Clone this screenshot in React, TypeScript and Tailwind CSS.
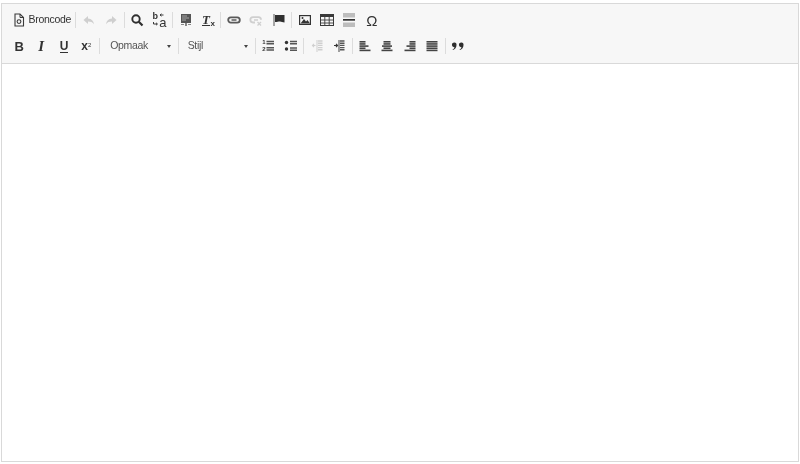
import React from "react";

const C = "#3a3a3a";
const D = "#cfcfcf";

function Btn({ children }: { children: React.ReactNode }) {
  return <div className="flex h-[22px] w-[22.4px] shrink-0 items-center justify-center">{children}</div>;
}
function Sep() {
  return (
    <div className="flex h-[22px] w-[3.6px] shrink-0 items-center justify-center">
      <div className="h-[16px] w-px bg-[#dcdcdc]" />
    </div>
  );
}
function Ic({ children }: { children: React.ReactNode }) {
  return (
    <svg width="14" height="14" viewBox="0 0 14 14" className="block">
      {children}
    </svg>
  );
}
function Lines({ rows, color = "#444" }: { rows: [number, number][]; color?: string }) {
  return (
    <Ic>
      {rows.map(([x, w], i) => (
        <rect key={i} x={x} y={2 + i * 2.15} width={w} height="1.6" fill={color} />
      ))}
    </Ic>
  );
}
function Select({ label, width, pad }: { label: string; width: string; pad: string }) {
  return (
    <div className={`flex h-[22px] shrink-0 items-center justify-between pr-[6px] text-[10.5px] tracking-[-0.3px] text-[#555] ${pad} ${width}`}>
      <span>{label}</span>
      <span className="h-0 w-0 border-x-[2.5px] border-t-[3px] border-x-transparent border-t-[#444]" />
    </div>
  );
}

export default function App() {
  return (
    <div className="h-[464px] w-[800px] bg-white pl-px pr-px pt-[3px] font-['Liberation_Sans',Arial,sans-serif]">
      <div className="flex h-[459px] flex-col border border-[#d9d9d9] bg-white">
        <div className="flex h-[60px] shrink-0 flex-col gap-[4px] border-b border-[#d9d9d9] bg-[#f7f7f7] pl-[6px] pt-[5px]">
          <div className="flex items-center blur-[0.3px]">
            <div className="flex h-[22px] w-[66px] shrink-0 items-center pl-[5px] text-[10.5px] tracking-[-0.3px] text-[#333]">
              <svg width="12" height="14" viewBox="0 0 12 14" className="mr-[3.500px] shrink-0">
                <path d="M2 1h5l3.5 3.5V13H2z" fill="none" stroke={C} strokeWidth="1.1" />
                <path d="M7 1v3.5h3.5" fill="none" stroke={C} strokeWidth="1" />
                <circle cx="6" cy="8.6" r="1.9" fill="none" stroke={C} strokeWidth="1.1" />
              </svg>
              <span>Broncode</span>
            </div>
            <Sep />
            <Btn>
              <Ic><path d="M6 3 1.5 7 6 11V8.6c2.8 0 4.6.7 6 2.6-.4-3.300-2.400-5.400-6-5.800z" fill={D} /></Ic>
            </Btn>
            <Btn>
              <Ic><path d="M8 3l4.500 4L8 11V8.600c-2.800 0-4.600.7-6 2.600.4-3.300 2.400-5.400 6-5.800z" fill={D} /></Ic>
            </Btn>
            <Sep />
            <Btn>
              <Ic>
                <circle cx="6" cy="6" r="3.7" fill="none" stroke="#2f2f2f" strokeWidth="1.9" />
                <path d="M8.800 8.800 12.500 12.500" stroke="#2f2f2f" strokeWidth="2.200" />
              </Ic>
            </Btn>
            <Btn>
              <div className="relative h-[15px] w-[14px] font-['Liberation_Sans',sans-serif] text-[#333]">
                <span className="absolute left-0 top-[-3px] text-[9px] font-bold leading-[12px]">b</span>
                <span className="absolute right-0 top-[3px] text-[13px] leading-[13px]">a</span>
                <svg width="14" height="15" viewBox="0 0 14 15" className="absolute left-0 top-0">
                  <path d="M7 2h3.500M8.500.8 7 2l1.500 1.200" fill="none" stroke={C} strokeWidth="1" />
                  <path d="M0.500 9v2h3.500M3 9.800 4.500 11 3 12.200" fill="none" stroke={C} strokeWidth="1" />
                </svg>
              </div>
            </Btn>
            <Sep />
            <Btn>
              <Ic>
                <rect x="2" y="1" width="10" height="9" fill="#555" />
                <path d="M3 3h5M3 5h7M3 7h4" stroke="#bbb" strokeWidth=".8" />
                <path d="M7 10v3" stroke={C} strokeWidth="1.200" />
                <rect x="2" y="11" width="3" height="1" fill="#888" />
                <rect x="9" y="11" width="3" height="1" fill="#888" />
              </Ic>
            </Btn>
            <Btn>
              <div className="relative h-[14px] w-[14px] font-['Liberation_Serif',serif] text-[#333]">
                <span className="absolute left-[1px] top-0 text-[13px] font-bold italic leading-[13px]">T</span>
                <span className="absolute bottom-[-1px] right-0 font-['Liberation_Sans',sans-serif] text-[8px] font-bold leading-[8px]">x</span>
                <div className="absolute left-[1px] top-[12px] h-px w-[8px] bg-[#333]" />
              </div>
            </Btn>
            <Sep />
            <Btn>
              <Ic>
                <rect x="1.200" y="4.400" width="11.600" height="5.200" rx="2.600" fill="none" stroke="#5a5a5a" strokeWidth="1.800" />
                <path d="M4.500 7h5" stroke="#5a5a5a" strokeWidth="1.500" />
              </Ic>
            </Btn>
            <Btn>
              <Ic>
                <path d="M6 9.500H4A2.600 2.600 0 0 1 4 4.200h5.500a2.600 2.600 0 0 1 2.500 2.600" fill="none" stroke={D} strokeWidth="1.800" />
                <path d="M5 7h4" stroke={D} strokeWidth="1.500" />
                <path d="M8.500 9l3.500 3.500M12 9l-3.500 3.500" stroke={D} strokeWidth="1.300" />
              </Ic>
            </Btn>
            <Btn>
              <Ic>
                <path d="M2 1v12" stroke="#555" strokeWidth="1" />
                <path d="M3 2h9.500v7.500c-2 0-3-1-4.500-1-1.500 0-3 .5-5 .5z" fill="#2f2f2f" />
              </Ic>
            </Btn>
            <Sep />
            <Btn>
              <Ic>
                <rect x="1" y="2" width="12" height="10" fill="#333" />
                <rect x="2.200" y="3.200" width="9.600" height="7.600" fill="#f7f7f7" />
                <path d="M2.500 10.500 6 6l2 2.500L9.500 7l2.500 3.500z" fill="#333" />
                <circle cx="4.500" cy="5" r="1" fill="#333" />
              </Ic>
            </Btn>
            <Btn>
              <Ic>
                <rect x=".5" y="1.500" width="13" height="11" fill="none" stroke="#3a3a3a" />
                <rect x="0.500" y="1.500" width="13" height="2.500" fill="#3a3a3a" />
                <path d="M.5 7h13M.5 10h13M4.800 4v8.500M9.200 4v8.500" stroke="#3a3a3a" strokeWidth=".9" />
              </Ic>
            </Btn>
            <Btn>
              <Ic>
                <rect x="1" y="0" width="12" height="4.500" fill="#bdbdbd" />
                <rect x="1" y="6" width="12" height="1.700" fill="#333" />
                <rect x="1" y="9.500" width="12" height="4.500" fill="#bdbdbd" />
              </Ic>
            </Btn>
            <Btn>
              <span className="text-[15px] leading-none text-[#333]">Ω</span>
            </Btn>
          </div>
          <div className="flex items-center blur-[0.3px]">
            <Btn><span className="text-[13px] font-bold leading-none text-[#333]">B</span></Btn>
            <Btn><span className="mr-[1px] font-['Liberation_Serif',serif] text-[15px] font-bold italic leading-none text-[#333]">I</span></Btn>
            <Btn><span className="border-b-[1.500px] border-[#333] text-[12px] font-bold leading-[12px] text-[#333]">U</span></Btn>
            <Btn>
              <span className="text-[12px] font-bold leading-none text-[#333]">
                x<sup className="text-[6px] font-normal">2</sup>
              </span>
            </Btn>
            <Sep />
            <Select label="Opmaak" width="w-[75.400px]" pad="pl-[9px]" />
            <Sep />
            <Select label="Stijl" width="w-[73.400px]" pad="pl-[7.500px]" />
            <Sep />
            <Btn>
              <div className="relative h-[14px] w-[14px]">
                <span className="absolute left-[1px] top-[0px] text-[6px] font-bold leading-[7px] text-[#333]">1</span>
                <span className="absolute left-[1px] top-[6.500px] text-[6px] font-bold leading-[7px] text-[#333]">2</span>
                <svg width="14" height="14" viewBox="0 0 14 14" className="absolute left-0 top-0">
                  <path d="M5.500 2.500H13M5.500 4.700H13M5.500 8.700H13M5.500 10.900H13" stroke="#555" strokeWidth="1.500" />
                </svg>
              </div>
            </Btn>
            <Btn>
              <Ic>
                <circle cx="2.500" cy="3.500" r="1.700" fill="#333" />
                <circle cx="2.500" cy="10" r="1.700" fill="#333" />
                <path d="M6 2.600h7M6 4.800h7M6 9.100h7M6 11.300h7" stroke="#555" strokeWidth="1.500" />
              </Ic>
            </Btn>
            <Sep />
            <Btn>
              <Ic>
                <path d="M8 2h4.500M8 4.200h4.500M8 6.400h4.500M8 8.600h4.500M8 10.800h4.500" stroke={D} strokeWidth="1.400" />
                <path d="M7 1v12" stroke={D} strokeWidth="1" />
                <path d="M5.500 6.500H2.500M4 4.800 2.500 6.500 4 8.200" fill="none" stroke={D} strokeWidth="1.100" />
              </Ic>
            </Btn>
            <Btn>
              <Ic>
                <path d="M8 2h4.500M8 4.200h4.500M8 6.400h4.500M8 8.600h4.500M8 10.800h4.500" stroke="#555" strokeWidth="1.400" />
                <path d="M7 1v12" stroke="#444" strokeWidth="1" />
                <path d="M2 6.500H5.500M4 4.800l1.600 1.700L4 8.200" fill="none" stroke="#333" strokeWidth="1.100" />
              </Ic>
            </Btn>
            <Sep />
            <Btn><Lines rows={[[1.500, 6], [1.500, 6], [1.500, 9], [1.500, 6], [1.500, 11]]} /></Btn>
            <Btn><Lines rows={[[3.500, 7], [3.500, 7], [2, 10], [3.500, 7], [1.500, 11]]} /></Btn>
            <Btn><Lines rows={[[6.500, 6], [6.500, 6], [3.500, 9], [6.500, 6], [1.500, 11]]} /></Btn>
            <Btn><Lines rows={[[1.500, 11], [1.500, 11], [1.500, 11], [1.500, 11], [1.500, 11]]} /></Btn>
            <Sep />
            <Btn>
              <Ic>
                <path d="M3 3.500a2.300 2.300 0 0 1 2.500 2.500c0 2.500-1.500 4.500-3.500 5l-.4-.7C2.800 9.700 3.400 9 3.500 8.200A2.300 2.300 0 0 1 3 3.500zM10 3.500a2.300 2.300 0 0 1 2.500 2.500c0 2.500-1.500 4.500-3.500 5l-.4-.7c1.200-.6 1.800-1.300 1.900-2.100A2.300 2.300 0 0 1 10 3.500z" fill="#2f2f2f" />
              </Ic>
            </Btn>
          </div>
        </div>
        <div className="flex-1 bg-white" />
      </div>
    </div>
  );
}
